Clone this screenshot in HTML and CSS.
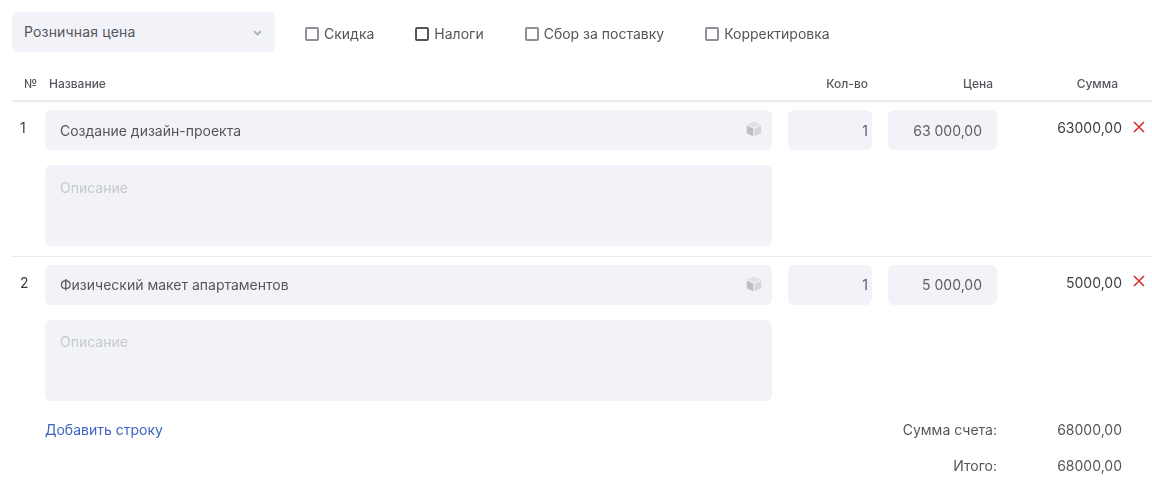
FILE: index.html
```html
<!DOCTYPE html>
<html lang="ru">
<head>
<meta charset="utf-8">
<title>Счёт</title>
<link rel="stylesheet" href="styles.css">
</head>
<body>
<svg class="defs" width="0" height="0" aria-hidden="true">
  <symbol id="cube" viewBox="0 0 16 16">
    <path d="M8 .4 15 3.4 8 6.5 1 3.4Z" fill="#e2e2e4"/>
    <path d="M.8 4.4 7.4 7.4V15.6L.8 12.2Z" fill="#bfbfc2"/>
    <path d="M15.2 4.4 8.6 7.4V15.6L15.2 12.2Z" fill="#d6d6d9"/>
  </symbol>
  <symbol id="cross" viewBox="0 0 12 12">
    <path d="M1 1 11 11M11 1 1 11" fill="none" stroke="#d32f2f" stroke-width="1.6"/>
  </symbol>
</svg>
<main class="page">
  <div class="toolbar">
    <div class="select">
      <span class="select-text">Розничная цена</span>
      <svg class="chevron" viewBox="0 0 10 6"><path d="M1.2 1 5 4.6 8.8 1" fill="none" stroke="#a9adb6" stroke-width="2"/></svg>
    </div>
    <label class="check"><span class="box"></span>Скидка</label>
    <label class="check"><span class="box box-dark"></span>Налоги</label>
    <label class="check"><span class="box"></span>Сбор за поставку</label>
    <label class="check"><span class="box"></span>Корректировка</label>
  </div>

  <div class="head">
    <div class="h-num">№</div>
    <div>Название</div>
    <div class="h-qty">Кол-во</div>
    <div class="h-price">Цена</div>
    <div class="h-sum">Сумма</div>
  </div>

  <div class="row row-first">
    <div class="num">1</div>
    <div class="main-col">
      <div class="field name"><span>Создание дизайн-проекта</span><svg class="cube"><use href="#cube"/></svg></div>
      <div class="field desc">Описание</div>
    </div>
    <div class="field qty">1</div>
    <div class="field price">63 000,00</div>
    <div class="sum">63000,00</div>
    <svg class="cross"><use href="#cross"/></svg>
  </div>

  <div class="row row-second">
    <div class="num">2</div>
    <div class="main-col">
      <div class="field name"><span>Физический макет апартаментов</span><svg class="cube"><use href="#cube"/></svg></div>
      <div class="field desc">Описание</div>
    </div>
    <div class="field qty">1</div>
    <div class="field price">5 000,00</div>
    <div class="sum">5000,00</div>
    <svg class="cross"><use href="#cross"/></svg>
  </div>

  <div class="footer">
    <a class="add" href="#">Добавить строку</a>
    <div class="totals">
      <div class="total-label">Сумма счета:</div><div class="total-value">68000,00</div>
      <div class="total-label">Итого:</div><div class="total-value">68000,00</div>
    </div>
  </div>
</main>
</body>
</html>
```
FILE: styles.css
```css
* { box-sizing: border-box; }
html, body { margin: 0; padding: 0; background: #fff; }
body { font-family: Inter, "Liberation Sans", sans-serif; font-size: 14px; line-height: 20px; color: #55565c; overflow: hidden; height: 482px; }
.defs { display: block; height: 0; }
.page { padding: 12px 0 0 12px; width: 1152px; will-change: opacity; }

.toolbar { display: flex; align-items: flex-start; height: 40px; }
.select { width: 263px; height: 40px; background: #f2f3f8; border-radius: 6px; padding: 10px 13px 10px 12px; display: flex; justify-content: space-between; align-items: center; }
.select-text { letter-spacing: 0.15px; }
.chevron { width: 9px; height: 6px; margin-top: 1px; }
.check { display: flex; align-items: center; margin-top: 12px; height: 20px; white-space: nowrap; }
.select + .check { margin-left: 30px; }
.check + .check { margin-left: 41px; }
.box { width: 14px; height: 14px; border: 2px solid #8e9097; border-radius: 2px; margin-right: 5px; background: #fff; }
.box-dark { border-color: #55565c; }

.head { display: grid; grid-template-columns: 37px 1fr 96px 125px 125px 34px; height: 50px; padding-top: 22px; border-bottom: 2px solid #e9ecef; font-size: 12px; font-weight: 500; color: #55565c; width: 1140px; }
.h-num { padding-left: 12px; }
.h-qty, .h-price, .h-sum { text-align: right; }

.row { display: grid; grid-template-columns: 33px 727px 100px 125px 125px 23px; width: 1140px; align-items: start; padding-top: 8px; }
.row-first { height: 155px; border-bottom: 1px solid #e9ecef; }
.num { padding-left: 8px; padding-top: 8px; color: #3f4045; }
.main-col { display: flex; flex-direction: column; gap: 15px; }
.field { background: #f2f3f8; border-radius: 6px; }
.name { height: 40px; padding: 11px 10px 9px 15px; display: flex; justify-content: space-between; align-items: flex-start; }
.row-second .name { padding-top: 10px; }
.row-second .desc { padding-top: 12px; }
.cube { width: 16px; height: 16px; margin-top: 0; }
.row-second .cube { margin-top: 1px; }
.desc { height: 81px; padding: 13px 15px; color: #c7c9d0; }
.qty, .price { height: 40px; padding: 11px 15px 9px 0; text-align: right; margin-left: 16px; color: #5c5d63; }
.qty { width: 84px; padding-right: 4px; }
.price { width: 109px; }
.row-second .qty, .row-second .price { padding-top: 10px; }
.sum { padding-top: 8px; text-align: right; color: #3f4045; }
.cross { width: 12px; height: 12px; margin-left: 11px; margin-top: 11px; }
.row-second .cross { margin-top: 10px; }

.footer { display: flex; justify-content: space-between; width: 1110px; padding-left: 33px; margin-top: 19px; }
.add { color: #3e63c4; text-decoration: none; }
.totals { display: grid; grid-template-columns: 100px 125px; grid-auto-rows: 20px; row-gap: 16px; }
.total-label, .total-value { text-align: right; }
```
